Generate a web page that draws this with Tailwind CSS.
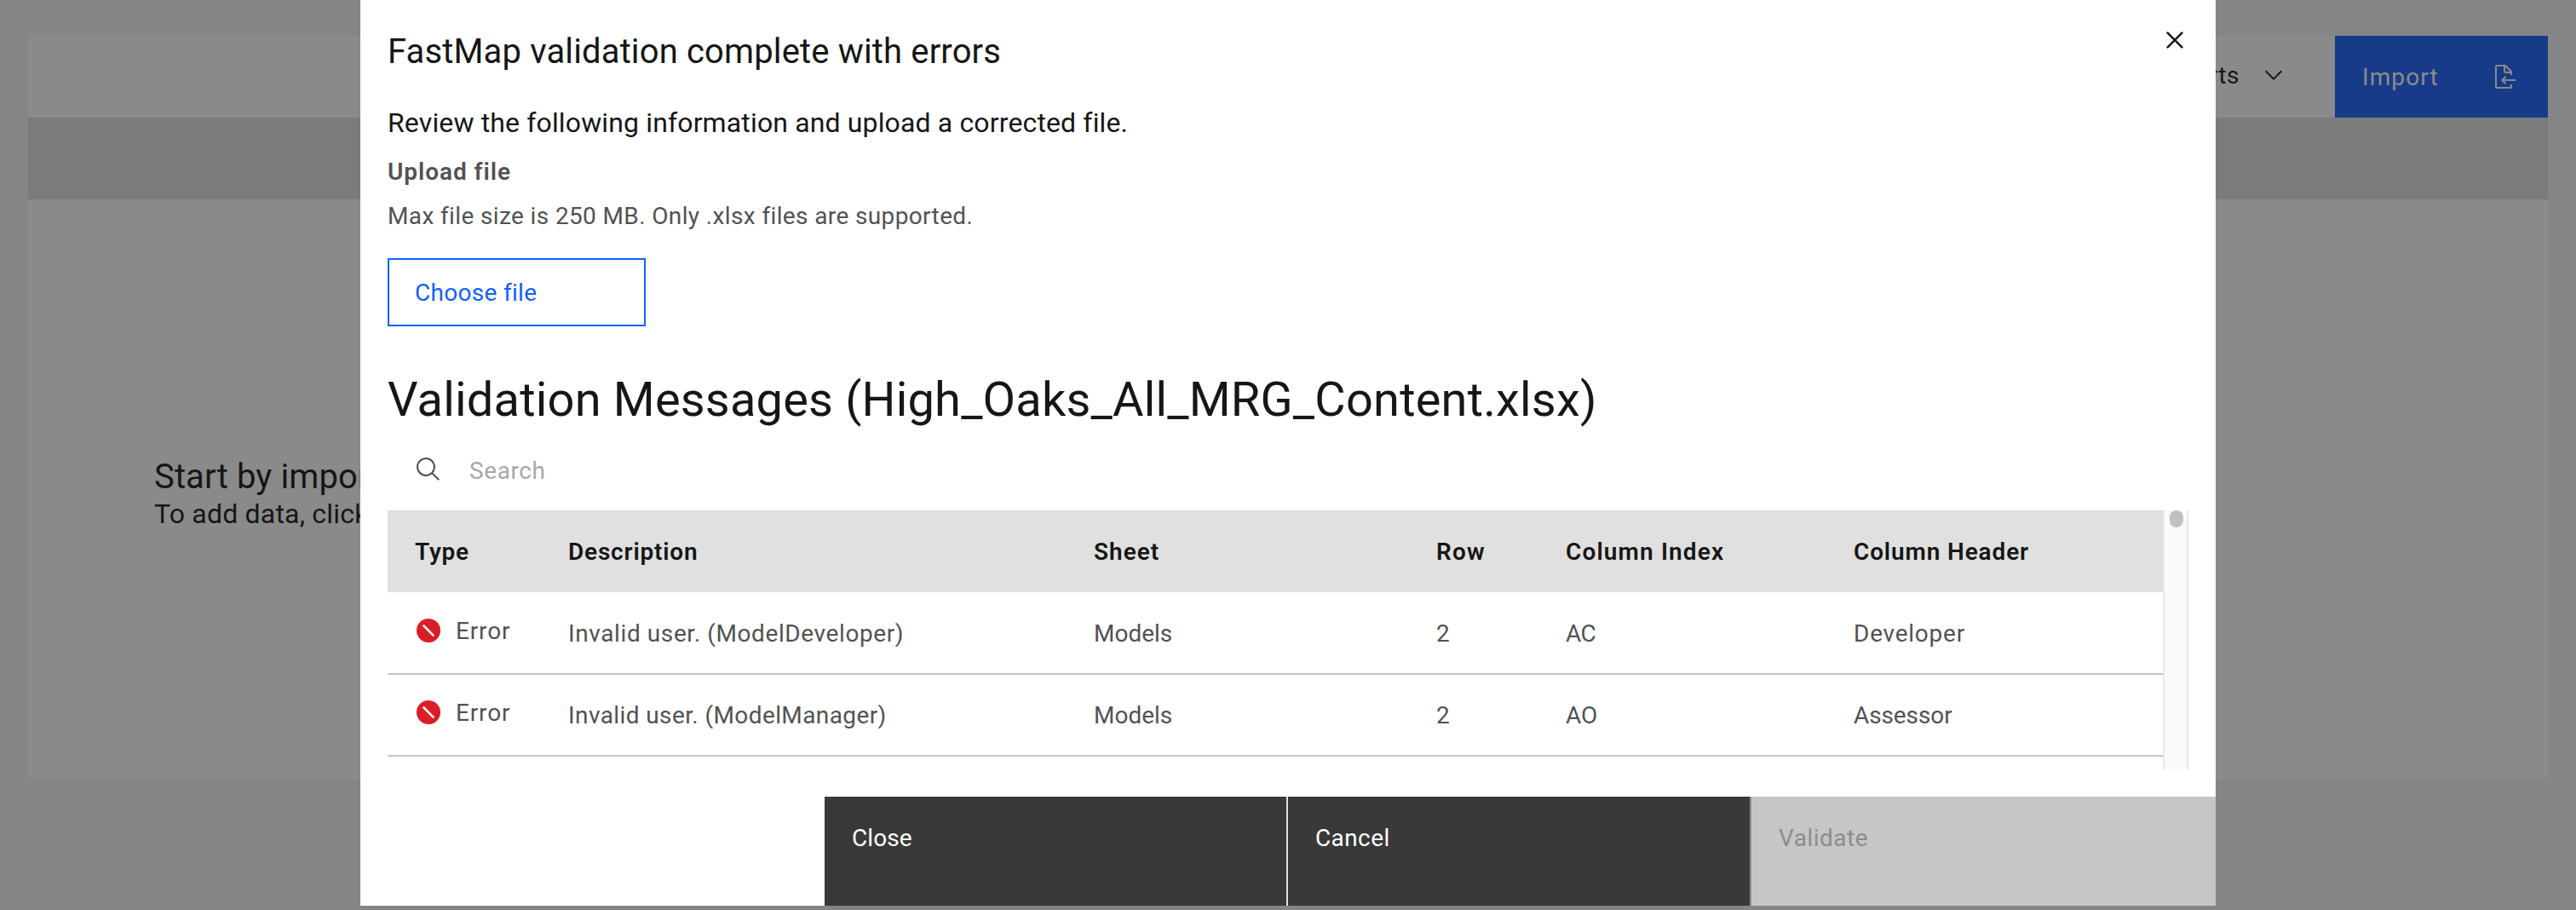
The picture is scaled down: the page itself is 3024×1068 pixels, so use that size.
<!DOCTYPE html>
<html lang="en">
<head>
<meta charset="utf-8">
<title>FastMap import</title>
<script src="https://cdn.jsdelivr.net/npm/@tailwindcss/browser@4"></script>
</head>
<body class="relative h-[1068px] w-[3024px] overflow-hidden bg-[#f4f4f4] font-['Roboto',sans-serif] text-[28px] leading-9 text-[#161616]">

  <!-- Page behind the dialog -->
  <main class="px-[33px] pt-[42px]">
    <div class="h-[872px] bg-white">
      <div class="flex h-24 justify-end">
        <button class="flex items-center gap-[24px] pr-[56px]">
          <span class="-mt-0.5 tracking-[0.6px]">Reports</span>
          <svg class="mt-[-4px] size-8" viewBox="0 0 16 16" fill="currentColor"><path d="M8 11 3 6l.7-.7L8 9.6l4.3-4.3.7.7z"/></svg>
        </button>
        <button class="flex w-[250px] items-center justify-between bg-[#1860fa] pl-8 pr-[34px] text-white">
          <span class="mt-0.5 tracking-[1.1px]">Import</span>
          <svg class="size-8" viewBox="0 0 32 32" fill="currentColor"><path d="M28 19H14.83l2.58-2.59L16 15l-5 5 5 5 1.41-1.41L14.83 21H28z"/><path d="M24 14v-4a1 1 0 0 0-.29-.71l-7-7A1 1 0 0 0 16 2H6a2 2 0 0 0-2 2v24a2 2 0 0 0 2 2h16a2 2 0 0 0 2-2v-3h-2v3H6V4h8v6a2 2 0 0 0 2 2h6v2zm-8-4V4.41L21.59 10z"/></svg>
        </button>
      </div>
      <div class="h-24 bg-[#e0e0e0]"></div>
      <div class="pl-[148px] pt-[301px]">
        <h2 class="text-[40px] leading-[50px] tracking-[0.13px]">Start by importing data</h2>
        <p class="text-[32px] leading-9 tracking-[0.2px]">To add data, click Import.</p>
      </div>
    </div>
  </main>

  <!-- Dialog -->
  <div class="absolute inset-0 flex items-start justify-center bg-[#161616]/50">
    <section class="flex h-[1063px] w-[2178px] flex-col bg-white">
      <div class="flex h-[120px] items-start justify-between pl-8 pr-7 pt-8">
        <h1 class="mt-px text-[40px] leading-[56px] tracking-[0.145px]">FastMap validation complete with errors</h1>
        <svg class="-mt-[5px] size-10" viewBox="0 0 32 32" fill="currentColor"><path d="M24 9.4 22.6 8 16 14.6 9.4 8 8 9.4l6.6 6.6L8 22.6 9.4 24l6.6-6.6 6.6 6.6 1.4-1.4-6.6-6.6z"/></svg>
      </div>
      <div class="flex h-[783px] flex-col px-8">
        <p class="text-[32px] leading-[48px] tracking-[0.14px]">Review the following information and upload a corrected file.</p>
        <p class="mt-4 font-semibold tracking-[0.94px] text-[#525252]">Upload file</p>
        <p class="mt-4 tracking-[0.37px] text-[#525252]">Max file size is 250 MB. Only .xlsx files are supported.</p>
        <button class="mt-[31px] flex h-20 w-[303px] shrink-0 items-center border-2 border-[#0f62fe] pl-[30px] pt-0.5 tracking-[0.3px] text-[#0f62fe]">Choose file</button>
        <h2 class="mt-[50px] text-[56px] leading-[72px] tracking-[0.18px]">Validation Messages (High_Oaks_All_MRG_Content.xlsx)</h2>
        <div class="mt-[29px] flex h-[65px] shrink-0 items-start gap-8 pl-8">
          <svg class="mt-px size-8 text-[#525252]" viewBox="0 0 32 32" fill="currentColor"><path d="m29 27.586-7.552-7.552a11.018 11.018 0 1 0-1.414 1.414L27.586 29zM4 13a9 9 0 1 1 9 9 9.01 9.01 0 0 1-9-9z"/></svg>
          <span class="mt-px tracking-[0.6px] text-[#a8a8a8]">Search</span>
        </div>
        <div class="flex h-[304px] shrink-0 overflow-hidden">
          <div class="flex-1 text-[#525252]">
            <div class="grid h-24 grid-cols-[180px_617px_402px_152px_338px_1fr] items-center bg-[#e0e0e0] pl-8 pt-0.5 font-semibold text-[#161616]">
              <span class="tracking-[0.73px]">Type</span><span class="tracking-[0.8px]">Description</span><span class="tracking-[1px]">Sheet</span><span class="tracking-[1.2px]">Row</span><span class="tracking-[1.13px]">Column Index</span><span class="tracking-[0.86px]">Column Header</span>
            </div>
            <div class="grid h-[97px] grid-cols-[180px_617px_402px_152px_338px_1fr] items-center border-b-2 border-[#c6c6c6] pl-8 pt-0.5">
              <span class="flex -translate-y-[3px] items-center gap-[18px] pl-0.5 tracking-[0.85px]"><svg class="size-7 -translate-y-px" viewBox="0 0 28 28"><circle cx="14" cy="14" r="14" fill="#da1e28"/><path d="m7.7 7.7 12.6 12.6" stroke="#fff" stroke-width="2.6"/></svg>Error</span>
              <span class="tracking-[0.6px]">Invalid user. (ModelDeveloper)</span><span>Models</span><span>2</span><span class="tracking-[-0.6px]">AC</span><span class="tracking-[0.75px]">Developer</span>
            </div>
            <div class="grid h-24 grid-cols-[180px_617px_402px_152px_338px_1fr] items-center border-b-2 border-[#c6c6c6] pl-8 pt-0.5">
              <span class="flex -translate-y-[3px] items-center gap-[18px] pl-0.5 tracking-[0.85px]"><svg class="size-7 -translate-y-px" viewBox="0 0 28 28"><circle cx="14" cy="14" r="14" fill="#da1e28"/><path d="m7.7 7.7 12.6 12.6" stroke="#fff" stroke-width="2.6"/></svg>Error</span>
              <span class="tracking-[0.4px]">Invalid user. (ModelManager)</span><span>Models</span><span>2</span><span>AO</span><span class="tracking-[-0.1px]">Assessor</span>
            </div>
          </div>
          <div class="flex w-[30px] justify-center border-x-2 border-[#e8e8e8] bg-[#fafafa]">
            <div class="ml-0.5 h-5 w-4 rounded-full bg-[#c1c1c1]"></div>
          </div>
        </div>
      </div>
      <footer class="mt-8 flex h-32 justify-end text-white">
        <button class="flex w-[544px] items-start border-r-2 border-[#e0e0e0] bg-[#393939] pl-8 pt-[31px] tracking-[0.1px]">Close</button>
        <button class="flex w-[544px] items-start border-r-2 border-[#8d8d8d] bg-[#393939] pl-8 pt-[31px] tracking-[0.4px]">Cancel</button>
        <button class="flex w-[545px] items-start bg-[#c6c6c6] pl-8 pt-[31px] tracking-[0.5px] text-[#8d8d8d]">Validate</button>
      </footer>
    </section>
  </div>
</body>
</html>
